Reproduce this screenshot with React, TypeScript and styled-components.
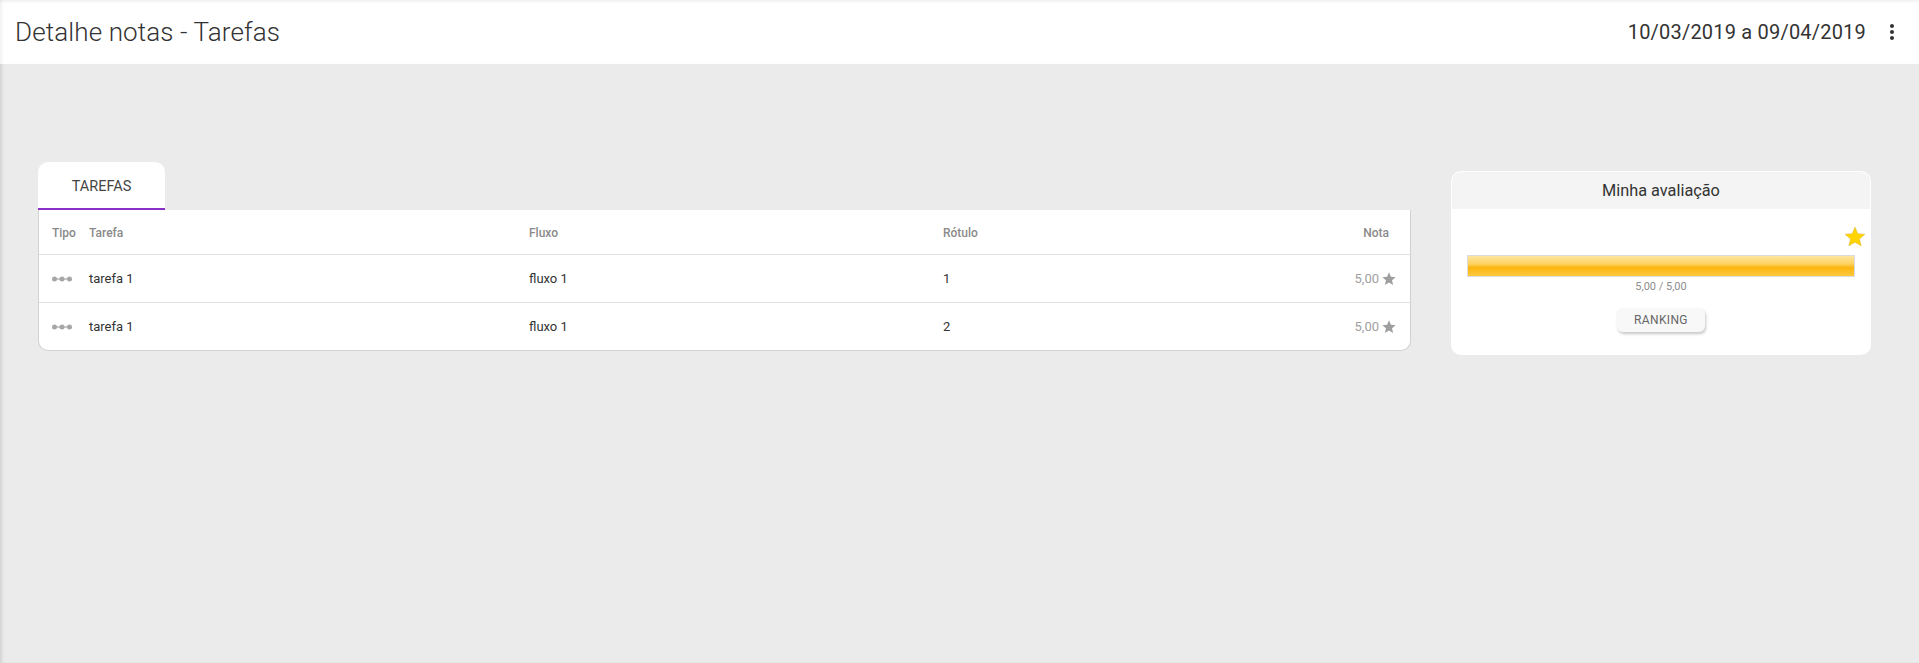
import React from "react";
import styled, { createGlobalStyle } from "styled-components";

const Global = createGlobalStyle`
  html, body { margin: 0; padding: 0; height: 100%; background: #ebebeb; overflow: hidden; }
  body { font-family: Roboto, "Liberation Sans", sans-serif; color: #333; }
`;

const Page = styled.div`
  height: 663px;
  background: #ebebeb;
  box-shadow: inset 3px 0 3px -1px rgba(0, 0, 0, 0.1);
`;

const Header = styled.header`
  height: 64px;
  box-sizing: border-box;
  background: linear-gradient(#f3f3f3 0, #fff 4px);
  box-shadow: inset 3px 0 3px -1px rgba(0, 0, 0, 0.06);
  display: flex;
  align-items: center;
  justify-content: space-between;
  padding: 0 17px 0 15px;
`;

const Title = styled.h1`
  margin: 0;
  font-size: 26px;
  font-weight: 300;
  color: #333;
  letter-spacing: 0.12px;
`;

const HeaderRight = styled.div`
  display: flex;
  align-items: center;
  gap: 16px;
`;

const DateRange = styled.span`
  font-size: 20px;
  font-weight: 400;
  color: #333;
  letter-spacing: 0.2px;
`;

const Dots = styled.svg`
  width: 24px;
  height: 24px;
  fill: #333;
  display: block;
  margin: 0 -2px;
`;

const Main = styled.main`
  display: flex;
  align-items: flex-start;
  padding-left: 38px;
  gap: 40px;
`;

const Left = styled.section`
  width: 1373px;
  margin-top: 98px;
`;

const Tab = styled.div`
  width: 127px;
  height: 48px;
  box-sizing: border-box;
  padding-top: 2px;
  background: #fff;
  border-radius: 10px 10px 0 0;
  border-bottom: 2px solid #8b2fc9;
  display: flex;
  align-items: center;
  justify-content: center;
  font-size: 14.5px;
  color: #444;
`;

const TableCard = styled.div`
  background: #fff;
  border: 1px solid #d2d2d2;
  border-top: 0;
  border-radius: 0 0 10px 10px;
`;

const Row = styled.div<{ $head?: boolean; $last?: boolean }>`
  display: grid;
  grid-template-columns: 37px 440px 414px 1fr 120px;
  align-items: center;
  height: ${(p) => (p.$head ? 42 : 47)}px;
  padding-left: 13px;
  padding-top: ${(p) => (p.$head ? 2 : 0)}px;
  border-bottom: ${(p) => (p.$last ? "none" : "1px solid #e0e0e0")};
  font-size: ${(p) => (p.$head ? 12 : 13)}px;
  color: ${(p) => (p.$head ? "#8a8a8a" : "#333")};
  font-weight: ${(p) => (p.$head ? 500 : 400)};
`;

const NotaHead = styled.span`
  text-align: right;
  padding-right: 21px;
`;

const NotaCell = styled.span`
  display: flex;
  align-items: center;
  justify-content: flex-end;
  gap: 2px;
  padding-right: 13px;
  color: #a0a0a0;
`;

const GreyStar = styled.svg`
  width: 16px;
  height: 16px;
  fill: #9e9e9e;
  display: block;
`;

const TypeIcon = styled.svg`
  width: 20px;
  height: 6px;
  display: block;
`;

const Right = styled.aside`
  width: 420px;
  margin-top: 107px;
  height: 184px;
  background: #fff;
  border-radius: 10px;
  overflow: hidden;
  display: flex;
  flex-direction: column;
`;

const RightHead = styled.div`
  height: 37px;
  margin: 1px 1px 0;
  background: #f4f4f4;
  border-radius: 9px 9px 0 0;
  display: flex;
  align-items: center;
  justify-content: center;
  font-size: 16.3px;
  color: #333;
`;

const RightBody = styled.div`
  display: flex;
  flex-direction: column;
  align-items: center;
  padding: 16px 16px 0;
`;

const StarRow = styled.div`
  align-self: stretch;
  display: flex;
  justify-content: flex-end;
  height: 30px;
  margin-right: -12px;
`;

const GoldStar = styled.svg`
  width: 24px;
  height: 24px;
  display: block;
`;

const Bar = styled.div`
  align-self: stretch;
  height: 22px;
  box-sizing: border-box;
  border: 1px solid #dcdcdc;
  background: linear-gradient(#fde6a0 0%, #fdd25f 40%, #fbb50f 58%, #fdc940 100%);
`;

const Score = styled.div`
  font-size: 11px;
  color: #8e8e8e;
  margin-top: 3px;
  line-height: 14px;
`;

const RankButton = styled.button`
  margin-top: 14px;
  width: 88px;
  height: 24px;
  padding: 0;
  border: 0;
  border-radius: 6px;
  background: #f8f8f8;
  box-shadow: 1px 2px 3px rgba(0, 0, 0, 0.22);
  font-family: inherit;
  font-size: 12px;
  letter-spacing: 0.35px;
  color: #666;
`;

const STAR = "M12 17.27 18.18 21l-1.64-7.03L22 9.24l-7.19-.61L12 2 9.19 8.63 2 9.24l5.46 4.73L5.82 21z";

const Type = () => (
  <TypeIcon viewBox="0 0 20 6">
    <rect x="1" y="2.25" width="18" height="1.5" fill="#b8b8b8" />
    <circle cx="2.5" cy="3" r="2.5" fill="#a6a6a6" />
    <circle cx="10" cy="3" r="2.5" fill="#a6a6a6" />
    <circle cx="17.5" cy="3" r="2.5" fill="#a6a6a6" />
  </TypeIcon>
);

const rows = [
  { tarefa: "tarefa 1", fluxo: "fluxo 1", rotulo: "1" },
  { tarefa: "tarefa 1", fluxo: "fluxo 1", rotulo: "2" },
];

export default function App() {
  return (
    <Page>
      <Global />
      <Header>
        <Title>Detalhe notas - Tarefas</Title>
        <HeaderRight>
          <DateRange>10/03/2019 a 09/04/2019</DateRange>
          <Dots viewBox="0 0 24 24">
            <path d="M12 8c1.1 0 2-.9 2-2s-.9-2-2-2-2 .9-2 2 .9 2 2 2zm0 2c-1.1 0-2 .9-2 2s.9 2 2 2 2-.9 2-2-.9-2-2-2zm0 6c-1.1 0-2 .9-2 2s.9 2 2 2 2-.9 2-2-.9-2-2-2z" />
          </Dots>
        </HeaderRight>
      </Header>
      <Main>
        <Left>
          <Tab>TAREFAS</Tab>
          <TableCard>
            <Row $head>
              <span>Tipo</span>
              <span>Tarefa</span>
              <span>Fluxo</span>
              <span>Rótulo</span>
              <NotaHead>Nota</NotaHead>
            </Row>
            {rows.map((r, i) => (
              <Row key={i} $last={i === rows.length - 1}>
                <Type />
                <span>{r.tarefa}</span>
                <span>{r.fluxo}</span>
                <span>{r.rotulo}</span>
                <NotaCell>
                  5,00
                  <GreyStar viewBox="0 0 24 24">
                    <path d={STAR} />
                  </GreyStar>
                </NotaCell>
              </Row>
            ))}
          </TableCard>
        </Left>
        <Right>
          <RightHead>Minha avaliação</RightHead>
          <RightBody>
            <StarRow>
              <GoldStar viewBox="0 0 24 24">
                <path d={STAR} fill="#ffd400" stroke="#d9b84a" strokeWidth="0.5" />
              </GoldStar>
            </StarRow>
            <Bar />
            <Score>5,00 / 5,00</Score>
            <RankButton>RANKING</RankButton>
          </RightBody>
        </Right>
      </Main>
    </Page>
  );
}
